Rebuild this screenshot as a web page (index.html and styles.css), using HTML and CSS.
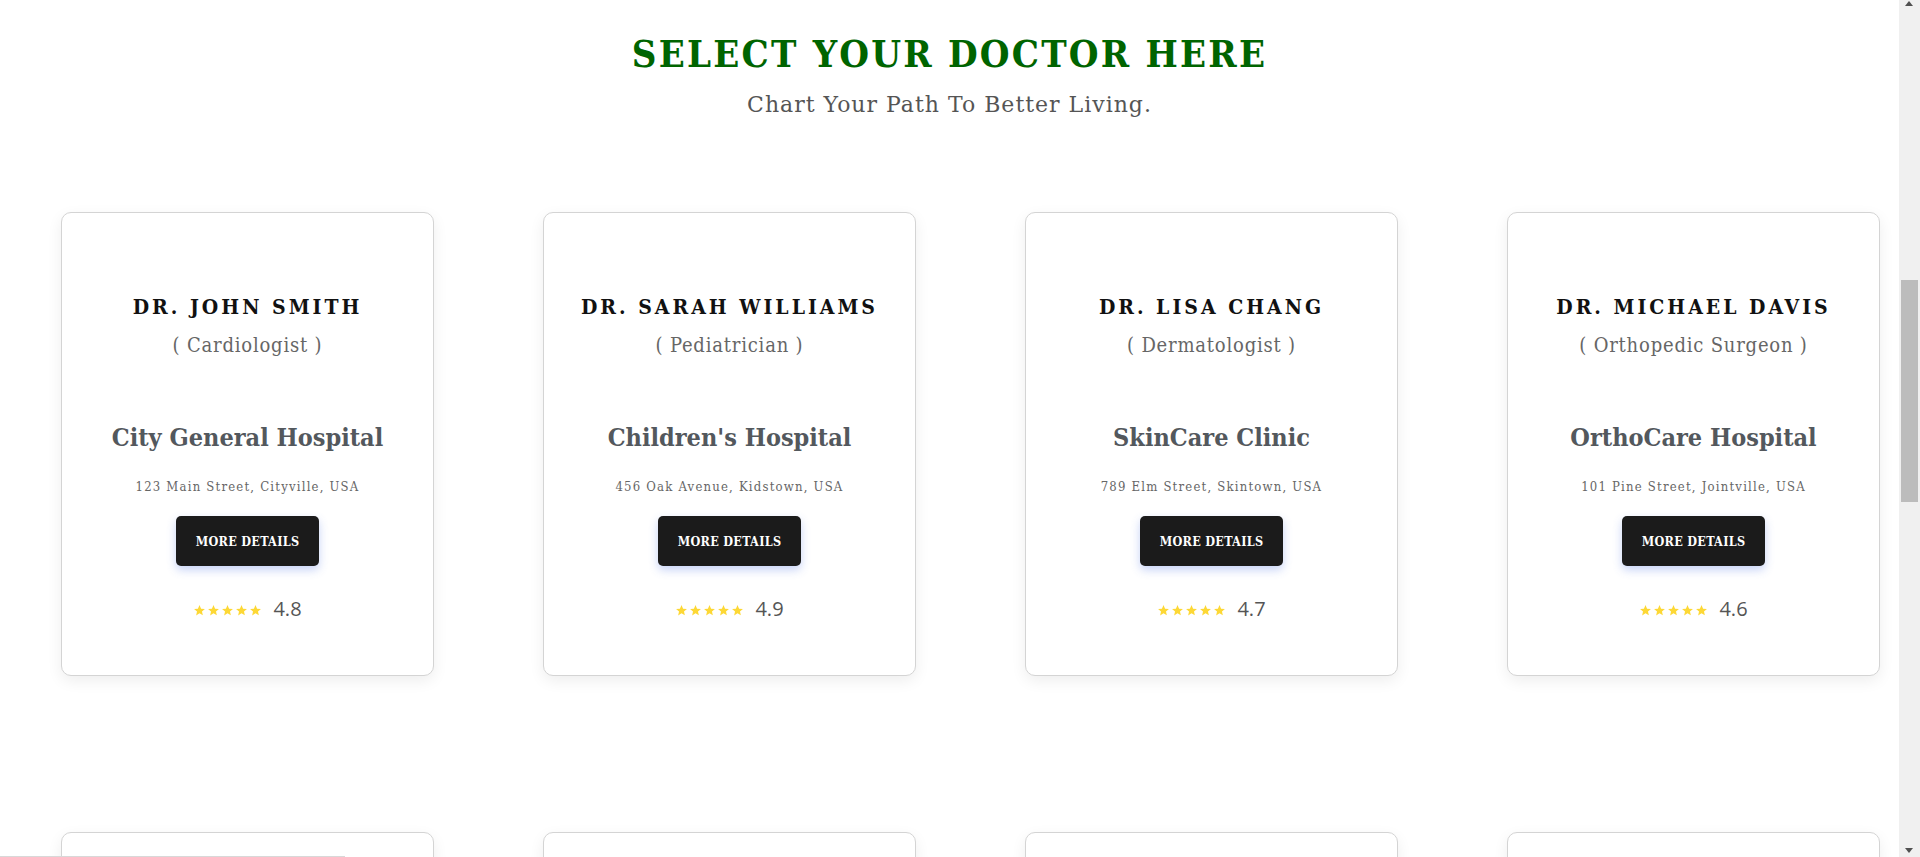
FILE: index.html
```html
<!DOCTYPE html>
<html lang="en">
<head>
<meta charset="utf-8">
<title>Select Your Doctor</title>
<link rel="stylesheet" href="styles.css">
</head>
<body>
<main class="page">
<section class="doctors">
  <header class="intro">
    <h1 class="intro-title">SELECT YOUR DOCTOR HERE</h1>
    <p class="intro-sub">Chart Your Path To Better Living.</p>
  </header>
  <div class="grid">
    <article class="card">
      <h2 class="doc-name">DR. JOHN SMITH</h2>
      <p class="doc-spec">( Cardiologist )</p>
      <h3 class="hosp">City General Hospital</h3>
      <p class="addr">123 Main Street, Cityville, USA</p>
      <button class="btn">MORE DETAILS</button>
      <div class="rating"><span class="stars"><svg viewBox="0 0 24 24"><path d="M12 2l2.9 6.6 7.1.6-5.4 4.7 1.6 7L12 17.3 5.8 21l1.6-7L2 9.2l7.1-.6z"/></svg><svg viewBox="0 0 24 24"><path d="M12 2l2.9 6.6 7.1.6-5.4 4.7 1.6 7L12 17.3 5.8 21l1.6-7L2 9.2l7.1-.6z"/></svg><svg viewBox="0 0 24 24"><path d="M12 2l2.9 6.6 7.1.6-5.4 4.7 1.6 7L12 17.3 5.8 21l1.6-7L2 9.2l7.1-.6z"/></svg><svg viewBox="0 0 24 24"><path d="M12 2l2.9 6.6 7.1.6-5.4 4.7 1.6 7L12 17.3 5.8 21l1.6-7L2 9.2l7.1-.6z"/></svg><svg viewBox="0 0 24 24"><path d="M12 2l2.9 6.6 7.1.6-5.4 4.7 1.6 7L12 17.3 5.8 21l1.6-7L2 9.2l7.1-.6z"/></svg></span><span class="score">4.8</span></div>
    </article>
    <article class="card">
      <h2 class="doc-name">DR. SARAH WILLIAMS</h2>
      <p class="doc-spec">( Pediatrician )</p>
      <h3 class="hosp">Children's Hospital</h3>
      <p class="addr">456 Oak Avenue, Kidstown, USA</p>
      <button class="btn">MORE DETAILS</button>
      <div class="rating"><span class="stars"><svg viewBox="0 0 24 24"><path d="M12 2l2.9 6.6 7.1.6-5.4 4.7 1.6 7L12 17.3 5.8 21l1.6-7L2 9.2l7.1-.6z"/></svg><svg viewBox="0 0 24 24"><path d="M12 2l2.9 6.6 7.1.6-5.4 4.7 1.6 7L12 17.3 5.8 21l1.6-7L2 9.2l7.1-.6z"/></svg><svg viewBox="0 0 24 24"><path d="M12 2l2.9 6.6 7.1.6-5.4 4.7 1.6 7L12 17.3 5.8 21l1.6-7L2 9.2l7.1-.6z"/></svg><svg viewBox="0 0 24 24"><path d="M12 2l2.9 6.6 7.1.6-5.4 4.7 1.6 7L12 17.3 5.8 21l1.6-7L2 9.2l7.1-.6z"/></svg><svg viewBox="0 0 24 24"><path d="M12 2l2.9 6.6 7.1.6-5.4 4.7 1.6 7L12 17.3 5.8 21l1.6-7L2 9.2l7.1-.6z"/></svg></span><span class="score">4.9</span></div>
    </article>
    <article class="card">
      <h2 class="doc-name">DR. LISA CHANG</h2>
      <p class="doc-spec">( Dermatologist )</p>
      <h3 class="hosp">SkinCare Clinic</h3>
      <p class="addr">789 Elm Street, Skintown, USA</p>
      <button class="btn">MORE DETAILS</button>
      <div class="rating"><span class="stars"><svg viewBox="0 0 24 24"><path d="M12 2l2.9 6.6 7.1.6-5.4 4.7 1.6 7L12 17.3 5.8 21l1.6-7L2 9.2l7.1-.6z"/></svg><svg viewBox="0 0 24 24"><path d="M12 2l2.9 6.6 7.1.6-5.4 4.7 1.6 7L12 17.3 5.8 21l1.6-7L2 9.2l7.1-.6z"/></svg><svg viewBox="0 0 24 24"><path d="M12 2l2.9 6.6 7.1.6-5.4 4.7 1.6 7L12 17.3 5.8 21l1.6-7L2 9.2l7.1-.6z"/></svg><svg viewBox="0 0 24 24"><path d="M12 2l2.9 6.6 7.1.6-5.4 4.7 1.6 7L12 17.3 5.8 21l1.6-7L2 9.2l7.1-.6z"/></svg><svg viewBox="0 0 24 24"><path d="M12 2l2.9 6.6 7.1.6-5.4 4.7 1.6 7L12 17.3 5.8 21l1.6-7L2 9.2l7.1-.6z"/></svg></span><span class="score">4.7</span></div>
    </article>
    <article class="card">
      <h2 class="doc-name">DR. MICHAEL DAVIS</h2>
      <p class="doc-spec">( Orthopedic Surgeon )</p>
      <h3 class="hosp">OrthoCare Hospital</h3>
      <p class="addr">101 Pine Street, Jointville, USA</p>
      <button class="btn">MORE DETAILS</button>
      <div class="rating"><span class="stars"><svg viewBox="0 0 24 24"><path d="M12 2l2.9 6.6 7.1.6-5.4 4.7 1.6 7L12 17.3 5.8 21l1.6-7L2 9.2l7.1-.6z"/></svg><svg viewBox="0 0 24 24"><path d="M12 2l2.9 6.6 7.1.6-5.4 4.7 1.6 7L12 17.3 5.8 21l1.6-7L2 9.2l7.1-.6z"/></svg><svg viewBox="0 0 24 24"><path d="M12 2l2.9 6.6 7.1.6-5.4 4.7 1.6 7L12 17.3 5.8 21l1.6-7L2 9.2l7.1-.6z"/></svg><svg viewBox="0 0 24 24"><path d="M12 2l2.9 6.6 7.1.6-5.4 4.7 1.6 7L12 17.3 5.8 21l1.6-7L2 9.2l7.1-.6z"/></svg><svg viewBox="0 0 24 24"><path d="M12 2l2.9 6.6 7.1.6-5.4 4.7 1.6 7L12 17.3 5.8 21l1.6-7L2 9.2l7.1-.6z"/></svg></span><span class="score">4.6</span></div>
    </article>
    <article class="card card-next"></article>
    <article class="card card-next"></article>
    <article class="card card-next"></article>
    <article class="card card-next"></article>
  </div>
</section>
</main>
<div class="scrollbar" aria-hidden="true">
  <span class="sb-arrow sb-up"></span>
  <span class="sb-thumb"></span>
  <span class="sb-arrow sb-down"></span>
</div>
<div class="status-line"></div>
</body>
</html>
```

FILE: styles.css
```css
html, body {
  margin: 0;
  padding: 0;
  background: #ffffff;
}

body {
  font-family: "DejaVu Serif", "Liberation Serif", serif;
  color: #333;
}

.page {
  margin-right: 21px;
}

.doctors {
  padding-bottom: 120px;
}

.intro {
  text-align: center;
  padding-top: 31px;
}

.intro-title {
  margin: 0;
  font-size: 38px;
  line-height: 46px;
  font-weight: 700;
  letter-spacing: 2.2px;
  color: #006400;
  font-stretch: condensed;
}

.intro-sub {
  margin: 13px 0 0;
  font-size: 22px;
  line-height: 29px;
  color: #555;
  letter-spacing: 1px;
}

.grid {
  display: grid;
  grid-template-columns: repeat(4, 373px);
  column-gap: 109px;
  row-gap: 156px;
  padding-left: 61px;
  margin-top: 93px;
}

.card {
  box-sizing: border-box;
  height: 464px;
  border: 1px solid #d4d4d4;
  border-radius: 10px;
  background: #fff;
  box-shadow: 0 5px 15px rgba(0, 0, 0, 0.07);
  display: flex;
  flex-direction: column;
  align-items: center;
  padding-top: 80px;
}

.doc-name {
  margin: 0;
  font-size: 21px;
  line-height: 28px;
  font-weight: 700;
  letter-spacing: 3px;
  color: #111;
  font-stretch: condensed;
}

.doc-spec {
  margin: 11px 0 0;
  font-size: 20px;
  line-height: 26px;
  color: #666;
  letter-spacing: 0.8px;
  font-stretch: condensed;
}

.hosp {
  margin: 64px 0 0;
  font-size: 25px;
  line-height: 32px;
  font-weight: 700;
  color: #53585d;
  font-stretch: condensed;
}

.addr {
  margin: 24px 0 0;
  font-size: 13px;
  line-height: 18px;
  color: #666;
  letter-spacing: 1.2px;
  font-stretch: condensed;
}

.btn {
  margin-top: 20px;
  width: 143px;
  height: 50px;
  border: 0;
  border-radius: 5px;
  background: #1b1b1b;
  color: #fff;
  font-family: "DejaVu Serif", "Liberation Serif", serif;
  font-size: 12.5px;
  font-weight: 700;
  letter-spacing: 0.3px;
  font-stretch: condensed;
  box-shadow: 0 4px 10px rgba(70, 110, 230, 0.3);
  cursor: pointer;
}

.rating {
  margin-top: 31px;
  display: flex;
  align-items: center;
  gap: 11px;
}

.stars {
  display: flex;
  gap: 1px;
  padding-top: 3px;
}

.stars svg {
  width: 13px;
  height: 13px;
  fill: #fdd835;
}

.score {
  font-family: "Open Sans", "Liberation Sans", sans-serif;
  font-size: 20px;
  line-height: 24px;
  color: #555;
}

.scrollbar {
  position: fixed;
  top: 0;
  right: 0;
  width: 21px;
  height: 100vh;
  background: #f0f0f0;
}

.sb-thumb {
  position: absolute;
  left: 2px;
  top: 280px;
  width: 17px;
  height: 222px;
  background: #bcbcbc;
}

.sb-arrow {
  position: absolute;
  left: 6px;
  width: 0;
  height: 0;
  border-left: 4.5px solid transparent;
  border-right: 4.5px solid transparent;
}

.sb-up {
  top: 1px;
  border-bottom: 5px solid #505050;
}

.sb-down {
  bottom: 4px;
  border-top: 5px solid #505050;
}

.status-line {
  position: fixed;
  left: 0;
  bottom: 0;
  width: 345px;
  height: 1px;
  background: #d8d8d8;
}
```
